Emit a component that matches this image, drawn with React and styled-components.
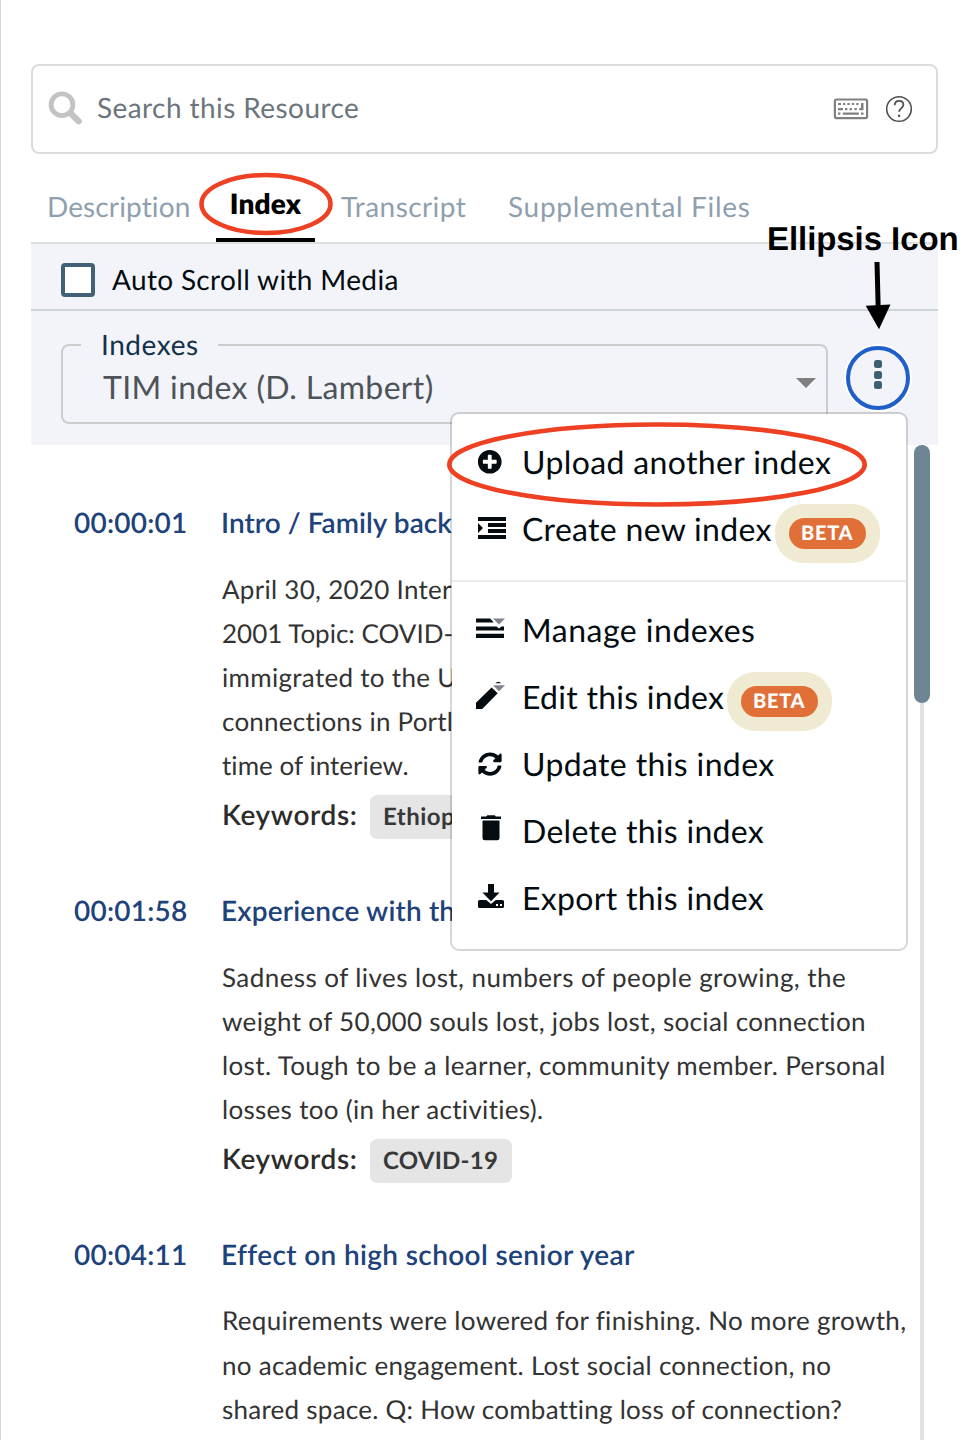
import React from "react";
import styled, { createGlobalStyle } from "styled-components";
import { FaPlusCircle, FaSyncAlt } from "react-icons/fa";

const GlobalStyle = createGlobalStyle`
  * { box-sizing: border-box; }
  body {
    margin: 0;
    background: #fff;
    font-family: Lato, "Noto Sans", sans-serif;
    text-rendering: geometricPrecision;
    -webkit-font-smoothing: antialiased;
  }
`;

const Page = styled.div`
  position: relative;
  width: 978px;
  height: 1440px;
  overflow: hidden;
  border-left: 1px solid #d6d6d6;
  padding: 64px 40px 0 30px;
`;

const Text = styled.span`
  white-space: nowrap;
  letter-spacing: ${(p) => p.$track || 0}px;
`;

/* Search */

const SearchBox = styled.div`
  display: flex;
  align-items: center;
  height: 90px;
  padding: 0 23px 0 14px;
  border: 2px solid #dcdcdc;
  border-radius: 8px;
`;

const SearchLabel = styled(Text)`
  flex: 1;
  padding: 0 0 4px 14px;
  font-size: 28px;
  color: #6c757d;
`;

const SearchTools = styled.div`
  display: flex;
  align-items: center;
  gap: 16px;
`;

/* Tabs */

const Tabs = styled.nav`
  display: grid;
  grid-template-columns: 185px 99px 166px 1fr;
  height: 90px;
  border-bottom: 2px solid #dcdfdf;
`;

const Tab = styled.div`
  padding: 35px 0 0 ${(p) => p.$indent || 27}px;
  font-size: 28px;
  line-height: 34px;
  color: #8f9fae;
`;

const ActiveTab = styled(Tab)`
  padding: 32px 0 0;
  text-align: center;
  font-weight: 800;
  color: #000;
  border-bottom: 4px solid #000;
`;

/* Toolbar */

const AutoScroll = styled.label`
  display: flex;
  align-items: center;
  gap: 17px;
  height: 67px;
  padding: 7px 30px 0;
  background: #f3f4f9;
  border-bottom: 2px solid #ccd5da;
`;

const Checkbox = styled.span`
  width: 34px;
  height: 34px;
  background: #fff;
  border: 4px solid #426176;
  border-radius: 4px;
`;

const AutoScrollLabel = styled(Text)`
  padding-bottom: 3px;
  font-size: 28px;
  color: #040c12;
`;

const IndexBar = styled.div`
  position: relative;
  display: flex;
  align-items: flex-start;
  gap: 18px;
  height: 134px;
  padding: 17px 28px 0 30px;
  background: #f3f4f9;
`;

const Select = styled.fieldset`
  width: 767px;
  height: 96px;
  margin: 0;
  padding: 0;
  border: 2px solid #cdcdcd;
  border-radius: 8px;
`;

const Legend = styled.legend`
  width: 137px;
  height: 34px;
  margin-left: 18px;
  padding: 0 0 2px 20px;
  font-size: 28px;
  line-height: 32px;
  color: #12324c;
`;

const SelectValue = styled.div`
  display: flex;
  align-items: center;
  justify-content: space-between;
  padding: 8px 10px 0 40px;
  font-size: 32px;
  line-height: 34px;
  color: #4d5358;
`;

const Caret = styled.span`
  margin-top: -8px;
  border: 10px solid transparent;
  border-top-color: #7f7f7f;
  border-bottom: 0;
`;

const EllipsisButton = styled.div`
  display: flex;
  flex-direction: column;
  align-items: center;
  gap: 2.4px;
  width: 64px;
  height: 64px;
  margin-top: 18px;
  padding-top: 10.2px;
  border: 4px solid #205ec8;
  border-radius: 50%;
  box-shadow: 0 0 0 2px #fff;
`;

const Dot = styled.i`
  width: 8px;
  height: 8px;
  border-radius: 2.5px;
  background: #3f6073;
`;

/* Menu */

const Menu = styled.div`
  position: absolute;
  z-index: 2;
  top: 101px;
  left: 419px;
  width: 458px;
  height: 539px;
  padding: 16px 0;
  background: #fff;
  background-clip: padding-box;
  border: 2px solid rgba(0, 0, 0, 0.16);
  border-radius: 9px;
`;

const MenuItem = styled.div`
  display: flex;
  align-items: center;
  height: 67px;
  padding-left: 23px;
  font-size: 32px;
  color: #040c12;
`;

const MenuIcon = styled.span`
  display: flex;
  flex: none;
  width: 47px;
  height: 32px;
`;

const MenuLabel = styled(Text)`
  flex: none;
  width: ${(p) => p.$width || "auto"};
  padding-bottom: 4px;
`;

const MenuDivider = styled.div`
  height: 2px;
  margin: 16px 0;
  background: #e9ebee;
`;

const BadgeHalo = styled.span`
  display: flex;
  width: 105px;
  height: 59px;
  margin-top: 6px;
  padding: 14px;
  background: #f1ead3;
  border-radius: 28px;
`;

const Badge = styled.span`
  flex: 1;
  padding-left: 12px;
  background: #e07038;
  border-radius: 16px;
  color: #fff;
  font-size: 20px;
  font-weight: 900;
  line-height: 31px;
  letter-spacing: 0.7px;
`;

/* Entries */

const Body = styled.div`
  position: relative;
  height: 995px;
  padding: 55px 0 0 42px;
`;

const Entry = styled.article`
  display: grid;
  grid-template-columns: 147px 1fr;
  margin-bottom: 49px;
`;

const Heading = styled(Text)`
  padding-left: 1px;
  font-size: 28px;
  font-weight: 600;
  line-height: 44px;
  color: #20427a;
`;

const Details = styled.div`
  grid-column: 2;
  padding: 22.6px 0 7.4px 2px;
`;

const Line = styled(Text)`
  display: block;
  font-size: 26px;
  line-height: 44.2px;
  color: #333;
`;

const Keywords = styled.div`
  display: flex;
  grid-column: 2;
  padding-left: 2px;
  height: 44px;
`;

const KeywordsTitle = styled(Text)`
  width: 148px;
  font-size: 28px;
  font-weight: 600;
  line-height: 38px;
  color: #2c2c2c;
`;

const Tag = styled(Text)`
  padding: 0 14px 0 13px;
  background: #e5e5e5;
  border-radius: 7px;
  font-size: 24px;
  font-weight: 700;
  line-height: 43px;
  color: #383838;
`;

const ScrollTrack = styled.div`
  position: absolute;
  top: 0;
  left: 889px;
  width: 4px;
  height: 100%;
  background: #e3e3e3;
`;

const ScrollThumb = styled.div`
  width: 16px;
  height: 258px;
  margin-left: -6px;
  background: #6e8693;
  border-radius: 8px;
`;

/* Annotations */

const Markup = styled.svg`
  position: absolute;
  z-index: 3;
  top: 0;
  left: -1px;
`;

const Callout = styled.strong`
  position: absolute;
  z-index: 3;
  top: 220px;
  left: 766px;
  font: bold 33px/38px "Liberation Sans", sans-serif;
  letter-spacing: -0.07px;
  white-space: nowrap;
  color: #000;
`;

const SearchIcon = () => (
  <svg width="36" height="36" viewBox="0 0 36 36" fill="none" stroke="#c3c3c3">
    <circle cx="15" cy="13.7" r="10.9" strokeWidth="4.8" />
    <path d="M23.6 22.2 31.7 30.3" strokeWidth="6.2" strokeLinecap="round" />
  </svg>
);

const KeyboardIcon = () => (
  <svg width="36" height="22" viewBox="0 0 36 22" fill="#808080">
    <rect x="1.900" y="1.500" width="32.200" height="18.600" rx="1.500" fill="none" stroke="#808080" strokeWidth="2.200" />
    <path d="M5 5h3v2H5zM10 5h2.300v2H10zM14.400 5h2.300v2h-2.300zM18.800 5h2.300v2h-2.300zM23.200 5h2.300v2h-2.300zM28 5h2.500v7.200h-4.200V10H28zM5 10h5v2.200H5zM12 10h2.400v2.200H12zM16.600 10H19v2.200h-2.400zM21.400 10h2.400v2.200h-2.400zM5 14.600h2.400v2.200H5zM9.800 14.600h16v2.200h-16zM28 14.600h2.500v2.200H28z" />
  </svg>
);

const HelpIcon = () => (
  <svg width="28" height="28" viewBox="0 0 28 28" fill="none" stroke="#505050" strokeWidth="1.6">
    <circle cx="14" cy="14" r="12.3" />
    <path d="M9.700 10.300C9.700 7.400 11.500 5.900 14 5.900s4.400 1.500 4.400 3.900c0 3.200-4.200 3.400-4.200 7" strokeWidth="1.800" />
    <path d="M13 19.700h2.200v2.200H13z" fill="#505050" stroke="none" />
  </svg>
);

const Glyph = ({ children }) => (
  <svg width="32" height="32" viewBox="0 0 32 32" fill="#040c12" overflow="visible">{children}</svg>
);

const PlusIcon = () => (
  <Glyph><FaPlusCircle x="2.500" y="1.500" size={24.5} /></Glyph>
);

const IndentIcon = () => (
  <Glyph>
    <path d="M3 2h28v4H3zM13 8h18v4H13zM13 14h18v4H13zM3 20h28v4H3zM3 8l5 5-5 5z" />
  </Glyph>
);

const ManageIcon = () => (
  <Glyph>
    <path d="M1 2.500h14.200l3.600 4H1zM1 10.500h20.500l2.500 2 2.500-2H29v4H1zM1 17.800h28v4.200H1z" />
    <path d="M18 2.500h12l-6 6z" fill="#84808e" />
  </Glyph>
);

const EditIcon = () => (
  <Glyph>
    <path d="M1 26v-6.200L16.600 4.500l6.100 5.800L7.200 26zM20.300 0.200Q23.300-2.800 26.300.2z" />
    <path d="M18 2.200h12l-6 6z" fill="#84808e" />
  </Glyph>
);

const UpdateIcon = () => (
  <Glyph><FaSyncAlt x="3" y="2" size={24} /></Glyph>
);

const DeleteIcon = () => (
  <Glyph>
    <path transform="translate(0 -1.700)" d="M6 1.100h5.200L12.300 0h7.400l1.100 1.100H26V3.700H6zM7.500 5.200h17v17.300q0 2.500-2.500 2.500H10q-2.500 0-2.500-2.500z" />
  </Glyph>
);

const ExportIcon = () => (
  <Glyph>
    <path d="M13 0h6v8.500h5.600L16 17.300 7.400 8.500H13z" />
    <path d="M4.500 16h6.800l4.700 4 4.700-4h6.800Q29 16 29 17.500v5q0 1.500-1.500 1.500h-23Q3 24 3 22.500v-5Q3 16 4.500 16z" />
    <path d="M21 20h2v2h-2zM25 20h2v2h-2z" fill="#fff" />
  </Glyph>
);

const MENU_TOP = [
  { label: "Upload another index", track: 0.37, Icon: PlusIcon },
  { label: "Create new index", track: 0.31, Icon: IndentIcon, beta: "253px" },
];

const MENU_BOTTOM = [
  { label: "Manage indexes", track: 0.5, Icon: ManageIcon },
  { label: "Edit this index", track: 0.27, Icon: EditIcon, beta: "205px" },
  { label: "Update this index", track: 0.37, Icon: UpdateIcon },
  { label: "Delete this index", track: 0.3, Icon: DeleteIcon },
  { label: "Export this index", track: 0.3, Icon: ExportIcon },
];

const ENTRIES = [
  {
    time: "00:00:01",
    title: "Intro / Family background",
    track: 0.05,
    lines: [
      ["April 30, 2020 Interview", 0.28],
      ["2001 Topic: COVID-19", 0],
      ["immigrated to the US", 0.3],
      ["connections in Portland", 0.22],
      ["time of interiew.", 0.04],
    ],
    keyword: ["Ethiopia", 0.45],
  },
  {
    time: "00:01:58",
    title: "Experience with the",
    track: 0.15,
    lines: [
      ["Sadness of lives lost, numbers of people growing, the", 0.43],
      ["weight of 50,000 souls lost, jobs lost, social connection", 0.33],
      ["lost. Tough to be a learner, community member. Personal", 0.37],
      ["losses too (in her activities).", 0.3],
    ],
    keyword: ["COVID-19", 0.25],
  },
  {
    time: "00:04:11",
    title: "Effect on high school senior year",
    track: 0.37,
    lines: [
      ["Requirements were lowered for finishing. No more growth,", 0.32],
      ["no academic engagement. Lost social connection, no", 0.27],
      ["shared space. Q: How combatting loss of connection?", 0.25],
    ],
  },
];

const MenuGroup = ({ items }) =>
  items.map(({ label, track, Icon, beta }) => (
    <MenuItem key={label}>
      <MenuIcon><Icon /></MenuIcon>
      <MenuLabel $track={track} $width={beta}>{label}</MenuLabel>
      {beta && <BadgeHalo><Badge>BETA</Badge></BadgeHalo>}
    </MenuItem>
  ));

export default function App() {
  return (
    <Page>
      <GlobalStyle />
      <SearchBox>
        <SearchIcon />
        <SearchLabel $track={0.42}>Search this Resource</SearchLabel>
        <SearchTools>
          <KeyboardIcon />
          <HelpIcon />
        </SearchTools>
      </SearchBox>
      <Tabs>
        <Tab $indent={16}><Text $track={0.12}>Description</Text></Tab>
        <ActiveTab><Text $track={0.15}>Index</Text></ActiveTab>
        <Tab $indent={26}><Text $track={0.42}>Transcript</Text></Tab>
        <Tab><Text $track={0.68}>Supplemental Files</Text></Tab>
      </Tabs>
      <AutoScroll>
        <Checkbox />
        <AutoScrollLabel $track={0.34}>Auto Scroll with Media</AutoScrollLabel>
      </AutoScroll>
      <IndexBar>
        <Select>
          <Legend><Text $track={0.56}>Indexes</Text></Legend>
          <SelectValue>
            <Text $track={0.34}>TIM index (D. Lambert)</Text>
            <Caret />
          </SelectValue>
        </Select>
        <EllipsisButton><Dot /><Dot /><Dot /></EllipsisButton>
        <Menu>
          <MenuGroup items={MENU_TOP} />
          <MenuDivider />
          <MenuGroup items={MENU_BOTTOM} />
        </Menu>
      </IndexBar>
      <Body>
        {ENTRIES.map(({ time, title, track, lines, keyword }) => (
          <Entry key={time}>
            <Heading $track={0.23}>{time}</Heading>
            <Heading $track={track}>{title}</Heading>
            <Details>
              {lines.map(([text, spacing]) => (
                <Line key={text} $track={spacing}>{text}</Line>
              ))}
            </Details>
            {keyword && (
              <Keywords>
                <KeywordsTitle $track={0.62}>Keywords:</KeywordsTitle>
                <Tag $track={keyword[1]}>{keyword[0]}</Tag>
              </Keywords>
            )}
          </Entry>
        ))}
        <ScrollTrack><ScrollThumb /></ScrollTrack>
      </Body>
      <Callout>Ellipsis Icon</Callout>
      <Markup width="978" height="540" viewBox="0 0 978 540" fill="none">
        <ellipse cx="266" cy="204" rx="64.500" ry="29" stroke="#ee4023" strokeWidth="4.600" />
        <ellipse cx="657" cy="464.500" rx="207.700" ry="40" stroke="#ee4023" strokeWidth="4.600" />
        <path d="M877 262 878.200 308" stroke="#000" strokeWidth="5" />
        <path d="M865.700 305.800 890.500 304.600 879 329.300z" fill="#000" />
      </Markup>
    </Page>
  );
}
